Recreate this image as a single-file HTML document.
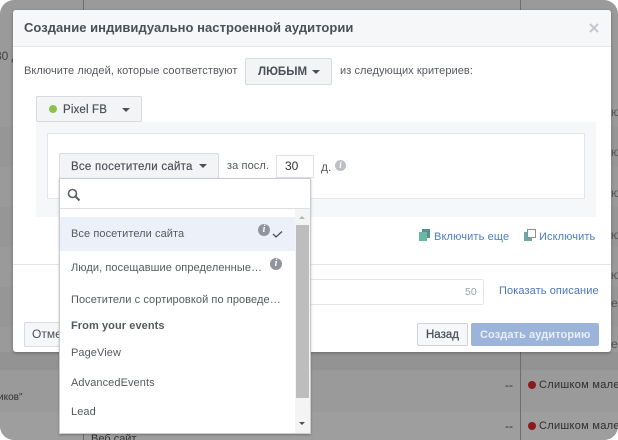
<!DOCTYPE html>
<html><head><meta charset="utf-8">
<style>
html,body{margin:0;padding:0;background:#fff}
#p{position:relative;width:618px;height:440px;overflow:hidden;background:#fff;font-family:"Liberation Sans",sans-serif;font-size:12px;color:#55595f;filter:blur(.35px)}
.a{position:absolute;white-space:nowrap}
.btn{position:absolute;background:#f3f4f6;border:1px solid #d8dadf;box-sizing:border-box;border-radius:2px}
.car{position:absolute;width:0;height:0;border-left:4.5px solid transparent;border-right:4.5px solid transparent;border-top:4.5px solid #4b4f56}
.li{font-size:11px;letter-spacing:.08px}
</style></head><body><div id="p">
<div class="a" style="left:0;top:0;width:618px;height:440px;background:#9a9a9a;border-radius:14px;overflow:hidden">
 <div class="a" style="left:0;top:127px;width:618px;height:40px;background:#969696"></div>
 <div class="a" style="left:0;top:207px;width:618px;height:40px;background:#969696"></div>
 <div class="a" style="left:0;top:287px;width:618px;height:40px;background:#969696"></div>
 <div class="a" style="left:0;top:352px;width:618px;height:18px;background:#939393"></div>
 <div class="a" style="left:0;top:412px;width:618px;height:28px;background:#9e9e9e"></div>
 <div class="a" style="left:83px;top:0;width:1px;height:10px;background:#6e6e6e"></div>
 <div class="a" style="left:83px;top:430px;width:1px;height:10px;background:#6e6e6e"></div>
 <div class="a" style="left:520px;top:0;width:1px;height:440px;background:#6e6e6e"></div>
 <div class="a" style="left:-5px;top:49px;color:#444">30 д</div>
 <div class="a" style="left:-2px;top:392px;font-size:10px;color:#333">иков"</div>
 <div class="a" style="left:91px;top:433px;font-size:11px;color:#333">Веб сайт</div>
 <div class="a" style="left:505px;top:378px;color:#333">--</div>
 <div class="a" style="left:505px;top:419px;color:#333">--</div>
 <div class="a" style="left:528px;top:381px;width:8px;height:8px;border-radius:50%;background:#8b1a1d"></div>
 <div class="a" style="left:528px;top:422px;width:8px;height:8px;border-radius:50%;background:#8b1a1d"></div>
 <div class="a" style="left:539px;top:379px;color:#2e2e2e;font-size:11px;letter-spacing:.3px">Слишком мале</div>
 <div class="a" style="left:539px;top:420px;color:#2e2e2e;font-size:11px;letter-spacing:.3px">Слишком мале</div>
 <div class="a" style="left:611px;top:105px;color:#555">ю</div>
 <div class="a" style="left:611px;top:145px;color:#555">ю</div>
 <div class="a" style="left:611px;top:186px;color:#555">ю</div>
 <div class="a" style="left:611px;top:228px;color:#555">ю</div>
 <div class="a" style="left:611px;top:268px;color:#555">ю</div>
 <div class="a" style="left:611px;top:296px;color:#555">е</div>
 <div class="a" style="left:611px;top:337px;color:#555">е</div>
</div>

<!-- modal -->
<div class="a" style="left:13px;top:10px;width:598px;height:342px;background:#fff;border-radius:3px;box-shadow:0 1px 3px rgba(0,0,0,.3)">
 <div class="a" style="left:0;top:0;width:598px;height:36px;background:#f6f7f9;border-bottom:1px solid #e5e5e5;border-radius:3px 3px 0 0"></div>
 <div class="a" style="left:11px;top:10px;font-size:13px;font-weight:bold;color:#4b4f56;letter-spacing:.04px">Создание индивидуально настроенной аудитории</div>
 <svg class="a" style="left:576px;top:13px" width="10" height="10" viewBox="0 0 10 10"><path d="M1 1L9 9M9 1L1 9" stroke="#c4c7cc" stroke-width="2"/></svg>

 <div class="a" style="left:11px;top:55px;font-size:11px;letter-spacing:.075px">Включите людей, которые соответствуют</div>
 <div class="a" style="left:327px;top:55px;font-size:11px;letter-spacing:.07px">из следующих критериев:</div>

 <div class="a" style="left:23px;top:112px;width:560px;height:95px;background:#f6f7f9"></div>
 <div class="btn" style="left:23px;top:86px;width:106px;height:26px"></div>
 <div class="a" style="left:36px;top:95px;width:8px;height:8px;border-radius:50%;background:#8bc34a"></div>
 <div class="a" style="left:50px;top:94px;font-size:11.5px;letter-spacing:.15px;color:#4b4f56;-webkit-text-stroke:.2px #4b4f56">Pixel FB</div>
 <div class="car" style="left:109px;top:98px"></div>

 <div class="a" style="left:34px;top:123px;width:536px;height:64px;background:#fff;border:1px solid #e3e5e8"></div>
</div>

<div class="btn" style="left:245px;top:58px;width:87px;height:27px"></div>
<div class="a" style="left:258px;top:66px;font-weight:bold;font-size:11.5px;color:#4b4f56">ЛЮБЫМ</div>
<div class="car" style="left:312px;top:70px"></div>

<div class="btn" style="left:59px;top:153px;width:160px;height:26px"></div>
<div class="a" style="left:71px;top:161px;font-size:11.5px;letter-spacing:.25px;color:#4b4f56;-webkit-text-stroke:.15px #4b4f56">Все посетители сайта</div>
<div class="car" style="left:199px;top:164px"></div>
<div class="a" style="left:227px;top:160px;font-size:11px;letter-spacing:.1px">за посл.</div>
<div class="a" style="left:276px;top:155px;width:36px;height:21px;background:#fff;border:1px solid #dfe1e5"></div>
<div class="a" style="left:285px;top:159px;font-size:12px;color:#333">30</div>
<div class="a" style="left:321px;top:160px;font-size:12px">д.</div>
<div class="a" style="left:335px;top:160px;width:11px;height:11px;border-radius:50%;background:#bcc0c6;color:#fff;font:bold italic 9px/11px 'Liberation Serif',serif;text-align:center">i</div>

<div class="a" style="left:419px;top:229px;width:11px;height:11px"><svg width="11" height="13" viewBox="0 0 11 13"><path d="M3 0H11V9H8V12H0V3H3Z" fill="#6ab9a6"/><path d="M3 0H11V9H8V3H3Z" fill="#5a8f90"/></svg></div>
<div class="a" style="left:434px;top:231px;font-size:11px;letter-spacing:.14px;color:#4a80c8">Включить еще</div>
<div class="a" style="left:524px;top:229px"><svg width="12" height="13" viewBox="0 0 12 13"><rect x="0" y="3" width="8" height="9" fill="#6aa9a6"/><rect x="3.5" y=".5" width="8" height="8" fill="#fff" stroke="#8a9099"/></svg></div>
<div class="a" style="left:539px;top:231px;font-size:11px;letter-spacing:.1px;color:#4a80c8">Исключить</div>

<div class="a" style="left:13px;top:264px;width:598px;height:1px;background:#e5e5e5"></div>
<div class="a" style="left:300px;top:279px;width:184px;height:26px;background:#fff;border:1px solid #e3e5e8;box-sizing:border-box;border-radius:2px"></div>
<div class="a" style="left:465px;top:286px;font-size:10.5px;color:#9a9ea5">50</div>
<div class="a" style="left:499px;top:285px;font-size:11px;letter-spacing:.1px;color:#4a76bd">Показать описание</div>

<div class="btn" style="left:24px;top:322px;width:50px;height:25px;background:#f6f7f9"></div>
<div class="a" style="left:32px;top:327px;color:#4b4f56;font-size:12px">Отмена</div>
<div class="btn" style="left:417px;top:323px;width:51px;height:23px;background:#f6f7f9;border-color:#ced0d4"></div>
<div class="a" style="left:426px;top:329px;font-size:11.5px;color:#4b4f56;-webkit-text-stroke:.25px #4b4f56">Назад</div>
<div class="a" style="left:471px;top:323px;width:128px;height:23px;background:#9db4da;border-radius:2px"></div>
<div class="a" style="left:480px;top:329px;font-weight:bold;font-size:11px;letter-spacing:.1px;color:#e8eef8">Создать аудиторию</div>

<!-- dropdown -->
<div class="a" style="left:59px;top:178px;width:252px;height:256px;background:#fff;border:1px solid #c9ccd1;box-sizing:border-box;box-shadow:0 1px 2px rgba(0,0,0,.25)">
 <div class="a" style="left:0;top:29px;width:250px;height:1px;background:#dddfe2"></div>
 <svg class="a" style="left:7px;top:9px" width="14" height="14" viewBox="0 0 14 14"><circle cx="5.5" cy="5.5" r="4" fill="none" stroke="#5b5f66" stroke-width="1.6"/><path d="M8.5 8.5L12.5 12.5" stroke="#5b5f66" stroke-width="2"/></svg>
 <div class="a" style="left:0;top:38px;width:236px;height:34px;background:#ecf0f9"></div>
 <div class="a" style="left:235px;top:30px;width:15px;height:224px;background:#f4f4f4"></div>
 <div class="a" style="left:236px;top:46px;width:13px;height:173px;background:#bdbdbd"></div>
 <div class="a" style="left:239px;top:37px;width:0;height:0;border-left:3.5px solid transparent;border-right:3.5px solid transparent;border-bottom:3px solid #b5b5b5"></div>
 <div class="a" style="left:239px;top:243px;width:0;height:0;border-left:3.5px solid transparent;border-right:3.5px solid transparent;border-top:3px solid #4b4f56"></div>
</div>
<div class="a li" style="left:71px;top:228px">Все посетители сайта</div>
<div class="a" style="left:258px;top:224px;width:12px;height:12px;border-radius:50%;background:#90949c;color:#fff;font:bold italic 10px/12px 'Liberation Serif',serif;text-align:center">i</div>
<svg class="a" style="left:272px;top:230px" width="11" height="8" viewBox="0 0 11 8"><path d="M1 4L4 7L10 1.5" fill="none" stroke="#4b4f56" stroke-width="1.3"/></svg>
<div class="a li" style="left:71px;top:262px">Люди, посещавшие определенные…</div>
<div class="a" style="left:270px;top:258px;width:12px;height:12px;border-radius:50%;background:#90949c;color:#fff;font:bold italic 10px/12px 'Liberation Serif',serif;text-align:center">i</div>
<div class="a li" style="left:71px;top:294px">Посетители с сортировкой по проведе…</div>
<div class="a li" style="left:71px;top:320px;font-weight:bold">From your events</div>
<div class="a li" style="left:71px;top:347px">PageView</div>
<div class="a li" style="left:71px;top:377px">AdvancedEvents</div>
<div class="a li" style="left:71px;top:406px">Lead</div>
</div></body></html>
